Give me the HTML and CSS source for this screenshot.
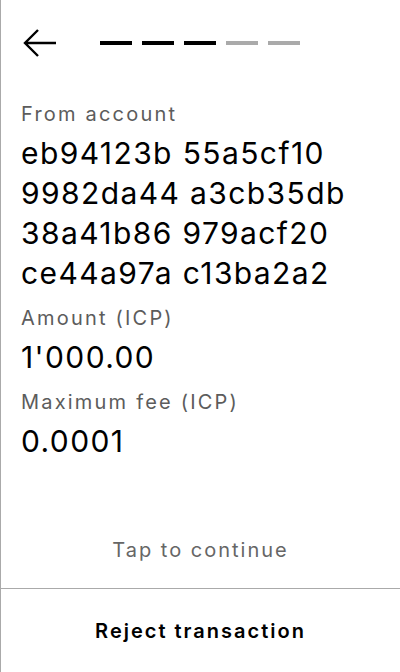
FILE: index.html
```html
<!DOCTYPE html>
<html>
<head>
<meta charset="utf-8">
<link rel="stylesheet" href="styles.css">
</head>
<body>
<div class="screen">
  <header class="top">
    <svg class="back" width="34" height="30" viewBox="0 0 34 30" aria-label="Back">
      <path d="M33 14H2M15 1L2 14L15 27" fill="none" stroke="#000" stroke-width="2.4"/>
    </svg>
    <div class="steps">
      <span class="step done"></span>
      <span class="step done"></span>
      <span class="step done"></span>
      <span class="step"></span>
      <span class="step"></span>
    </div>
  </header>
  <main class="content">
    <div class="field">
      <div class="label">From account</div>
      <div class="value">eb94123b 55a5cf10<br>9982da44 a3cb35db<br>38a41b86 979acf20<br>ce44a97a c13ba2a2</div>
    </div>
    <div class="field">
      <div class="label">Amount (ICP)</div>
      <div class="value">1'000.00</div>
    </div>
    <div class="field">
      <div class="label">Maximum fee (ICP)</div>
      <div class="value">0.0001</div>
    </div>
  </main>
  <div class="tap">Tap to continue</div>
  <div class="reject">Reject transaction</div>
</div>
</body>
</html>
```
FILE: styles.css
```css
html, body {
  margin: 0;
  padding: 0;
  background: #fff;
}
.screen {
  box-sizing: border-box;
  width: 400px;
  height: 672px;
  border-left: 1px solid #aaa;
  display: flex;
  flex-direction: column;
  font-family: Inter, "Noto Sans", sans-serif;
  color: #000;
}
.top {
  display: flex;
  align-items: center;
  height: 30px;
  padding: 29px 0 0 22px;
}
.back {
  display: block;
}
.steps {
  display: flex;
  gap: 10px;
  margin-left: 43px;
  margin-top: -3px;
}
.step {
  width: 32px;
  height: 4px;
  background: #aaa;
}
.step.done {
  background: #000;
}
.content {
  padding: 41px 0 0 20px;
  display: flex;
  flex-direction: column;
  gap: 11px;
}
.label {
  font-size: 20px;
  line-height: 28px;
  letter-spacing: 2.2px;
  color: #5c5c5c;
}
.value {
  font-size: 30px;
  line-height: 40px;
  letter-spacing: 1.4px;
  margin-top: 5px;
}
.tap {
  margin-top: auto;
  text-align: center;
  font-size: 20px;
  line-height: 28px;
  letter-spacing: 2px;
  color: #666;
  padding-bottom: 24px;
  border-bottom: 1px solid #aaa;
}
.reject {
  height: 83px;
  display: flex;
  align-items: center;
  justify-content: center;
  font-size: 20px;
  font-weight: 600;
  letter-spacing: 2px;
}
```
